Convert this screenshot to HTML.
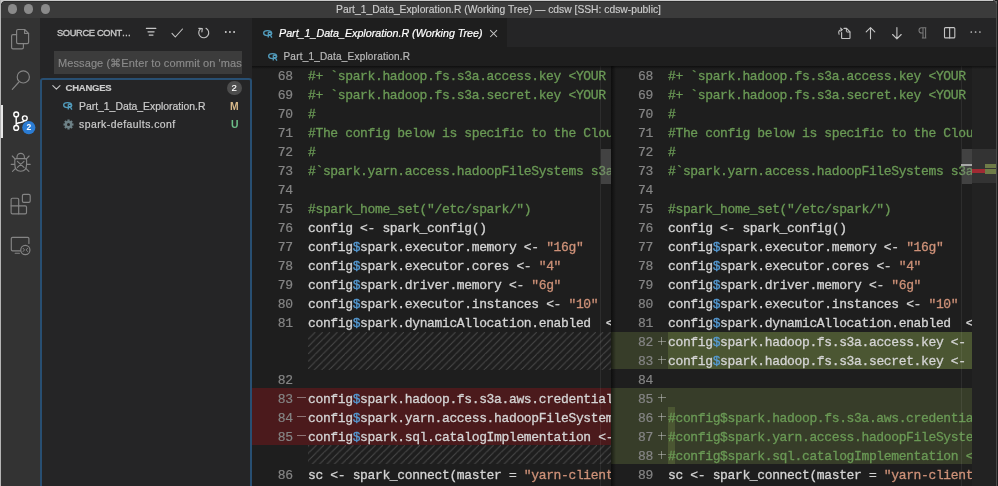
<!DOCTYPE html>
<html><head><meta charset="utf-8"><style>
*{margin:0;padding:0;box-sizing:border-box}
html,body{width:998px;height:486px;overflow:hidden;background:#c8c8c8}
body{position:relative;font-family:"Liberation Sans",sans-serif;-webkit-font-smoothing:antialiased}
.win{will-change:transform;position:absolute;left:0;top:0;width:998px;height:486px;overflow:hidden;background:#222222}
.edge{position:absolute;background:#c9c9c9}
.rb{position:absolute;left:996px;top:0;width:1px;height:486px;background:#3a3a3a}
.title{position:absolute;left:0;top:0;width:997px;height:18px;background:#3b3b3b}
.title .t{position:absolute;left:0;right:0;top:3.8px;-webkit-text-stroke:0.15px currentColor;text-align:center;color:#cccccc;font-size:10.3px;line-height:12px;white-space:pre}
.tl{position:absolute;top:4.4px;width:9.4px;height:9.4px;border-radius:50%;background:#8a8a8a}
.act{position:absolute;left:1px;top:18px;width:39px;height:468px;background:#333333}
.side{position:absolute;left:40px;top:18px;width:212px;height:468px;background:#252526}
.tabs{position:absolute;left:252px;top:18px;width:745px;height:29px;background:#252526}
.tab{position:absolute;left:0;top:0;width:254.5px;height:29px;background:#1e1e1e}
.crumb{position:absolute;left:252px;top:47px;width:745px;height:19px;background:#1e1e1e}
.ed{position:absolute;top:0;height:486px;overflow:hidden;background:linear-gradient(180deg,transparent 66px,#1e1e1e 66px)}
.ln{position:absolute;left:0;padding-top:2.15px;letter-spacing:-0.36px;-webkit-text-stroke:0.2px currentColor;width:42px;text-align:right;color:#858585;font-family:"Liberation Mono",monospace;font-size:13px;line-height:18.975px;height:18.975px}
.code{position:absolute;padding-top:2.15px;white-space:pre;letter-spacing:-0.36px;-webkit-text-stroke:0.3px currentColor;color:#d4d4d4;font-family:"Liberation Mono",monospace;font-size:13px;line-height:18.975px;height:18.975px}
.c{color:#6a9955} .d{color:#569cd6} .s{color:#ce9178}
.hatch{position:absolute;height:18.975px;background-image:repeating-linear-gradient(-45deg,rgba(200,200,200,.17) 0px,rgba(200,200,200,.17) 1.1px,transparent 1.1px,transparent 5.27px)}
.delbg{position:absolute;left:0;right:0;height:18.975px;background:#4b1a1c}
.insbg{position:absolute;left:0;right:0;height:18.975px;background:#373d29}
.instx{position:absolute;height:18.975px;background:#4b5632}
.sign{position:absolute;left:47px;padding-top:1.6px;width:8px;color:#8a8a8a;font-family:"Liberation Mono",monospace;font-size:13px;line-height:18.975px;height:18.975px;text-align:center}
.sg{position:absolute;background:rgba(205,205,205,.5)}
.svgabs{position:absolute;overflow:visible}
.actbar{position:absolute;left:0;top:87px;width:2px;height:33px;background:#e8e8e8}
.sidetitle{position:absolute;left:17px;top:9px;font-size:9.3px;font-weight:normal;-webkit-text-stroke:0.35px #c8c8c8;line-height:12px;color:#c8c8c8;white-space:pre;letter-spacing:-0.35px}
.inp{position:absolute;left:14px;top:33px;width:188px;height:23px;background:#3c3c3c;overflow:hidden}
.inp span{position:absolute;left:4px;top:6px;letter-spacing:0.1px;-webkit-text-stroke:0.15px currentColor;font-size:11px;line-height:13px;color:#8b8b8b;white-space:pre}
.focus{position:absolute;left:0;top:60px;width:212px;height:430px;border:2px solid #284f72;border-bottom:none;border-radius:3px 3px 0 0}
.changes{position:absolute;left:25.6px;top:63.5px;font-size:9.5px;letter-spacing:-0.25px;-webkit-text-stroke:0.15px #cccccc;font-weight:bold;line-height:12px;color:#cccccc;white-space:pre}
.badge{position:absolute;left:186.7px;top:62.9px;width:15px;height:14.2px;border-radius:7.1px;background:#4d4d4d;color:#fff;font-size:9.5px;line-height:14px;text-align:center;-webkit-text-stroke:0.15px #fff}
.f1{position:absolute;left:39px;top:82.5px;-webkit-text-stroke:0.2px currentColor;font-size:10.4px;line-height:12px;color:#cccccc;white-space:pre}
.f2{position:absolute;left:39px;top:100.5px;-webkit-text-stroke:0.2px currentColor;letter-spacing:0.47px;font-size:10.4px;line-height:12px;color:#cccccc;white-space:pre}
.m{position:absolute;left:190px;top:82.7px;font-size:10.4px;font-weight:bold;line-height:12px;color:#d8b98a;white-space:pre}
.u{position:absolute;left:191px;top:100.8px;font-size:10.4px;font-weight:bold;line-height:12px;color:#6dbf88;white-space:pre}
.tabt{position:absolute;left:27px;top:9px;-webkit-text-stroke:0.2px currentColor;font-size:10.7px;font-style:italic;line-height:12px;color:#ffffff;white-space:pre}
.crt{position:absolute;left:31.5px;top:4.3px;-webkit-text-stroke:0.2px currentColor;letter-spacing:0.2px;font-size:10px;line-height:12px;color:#bababa;white-space:pre}
.sbline{position:absolute;top:66px;width:1px;height:420px;background:rgba(255,255,255,.07)}
.slider{position:absolute;top:148.5px;width:11px;height:35.3px;background:rgba(121,121,121,.4)}
.rshadow{position:absolute;left:611px;top:66px;width:5px;height:420px;background:linear-gradient(90deg,rgba(0,0,0,.55),rgba(0,0,0,0))}
.ruler{position:absolute;left:972px;top:66px;width:25px;height:420px;background:#222222}
.rslider{position:absolute;left:0;top:82.5px;width:26px;height:34.5px;background:rgba(121,121,121,.2)}
.topshadow{position:absolute;left:252px;top:66px;width:746px;height:3px;background:linear-gradient(180deg,rgba(0,0,0,.5),rgba(0,0,0,0))}

.minus::after{content:"";position:absolute;left:0;right:0;top:9px;height:1px;background:#8a6a6a}
</style></head>
<body><div class="win">
<div class="title">
 <div class="tl" style="left:7.6px"></div><div class="tl" style="left:24.1px"></div><div class="tl" style="left:40.6px"></div>
 <div class="t">Part_1_Data_Exploration.R (Working Tree) — cdsw [SSH: cdsw-public]</div>
</div>
<div class="act"><div class="actbar"></div></div>
<svg class="svgabs" width="40" height="270" viewBox="0 0 40 270" style="left:0;top:0">
<g fill="none" stroke="#858585" stroke-width="1.15" stroke-linejoin="round" stroke-linecap="round">
 <!-- explorer -->
 <path d="M16.6 34.6 H13 Q11.6 34.6 11.6 36 V47.4 Q11.6 48.8 13 48.8 H22 Q23.4 48.8 23.4 47.4 V43.6"/>
 <path d="M18 29.5 H24.6 L28.6 33.5 V42.2 Q28.6 43.6 27.2 43.6 H18 Q16.6 43.6 16.6 42.2 V30.9 Q16.6 29.5 18 29.5 Z"/>
 <path d="M24.6 29.5 V33.5 H28.6"/>
 <!-- search -->
 <circle cx="23.3" cy="76.9" r="6.1"/>
 <path d="M18.9 82 L12.3 89.4"/>
 <!-- debug -->
 <path d="M17 158.6 V157.2 A3.7 3.9 0 0 1 24.4 157.2 V158.6"/>
 <path d="M14.8 160 Q14.8 158.6 16.2 158.6 H25.2 Q26.6 158.6 26.6 160 V164.2 Q26.6 171.2 20.7 171.2 Q14.8 171.2 14.8 164.2 Z"/>
 <path d="M17.4 161.4 L24 167.4 M24 161.4 L17.4 167.4"/>
 <path d="M12.3 156 L15 158.8 M29.1 156 L26.4 158.8 M11.2 164.3 H14.6 M30.2 164.3 H26.8 M12.5 171.3 L15.6 168.4 M28.9 171.3 L25.8 168.4"/>
 <!-- extensions -->
 <rect x="22.4" y="194.4" width="7.8" height="8" rx="1.4"/>
 <path d="M12.4 198.2 H17.4 Q18.7 198.2 18.7 199.5 V205.8 H25.2 Q26.5 205.8 26.5 207.1 V212.5 Q26.5 213.8 25.2 213.8 H12.4 Q11.1 213.8 11.1 212.5 V199.5 Q11.1 198.2 12.4 198.2 Z"/>
 <path d="M11.1 205.8 H18.7 V213.8"/>
 <!-- remote -->
 <path d="M20.3 250.9 H12.6 Q11.3 250.9 11.3 249.6 V238.6 Q11.3 237.3 12.6 237.3 H27.6 Q28.9 237.3 28.9 238.6 V243.5"/>
 <path d="M15.2 253.2 H19.4"/>
 <circle cx="25.35" cy="250" r="4.6"/>
 <path d="M23.1 248.3 L24.5 249.9 L23.1 251.5 M27.6 248.3 L26.2 249.9 L27.6 251.5" stroke-width="0.95"/>
</g>
<!-- source control (active) -->
<g fill="none" stroke="#ffffff" stroke-width="1.4">
 <circle cx="16.2" cy="114.4" r="2.4"/>
 <circle cx="16.2" cy="127.9" r="2.4"/>
 <circle cx="24.8" cy="118.3" r="2.4"/>
 <path d="M16.2 116.8 V125.5"/>
 <path d="M16.5 124.2 Q17.5 122.6 20.5 122.5 Q23.4 122.3 24.3 120.6"/>
</g>
<circle cx="28.8" cy="127.6" r="6.6" fill="#2b7cd3"/>
<text x="28.8" y="130.4" text-anchor="middle" font-family="Liberation Sans" font-weight="bold" font-size="8.5" fill="#fff">2</text>
</svg>
<div class="side">
 <div class="sidetitle">SOURCE CONT…</div>
 <div class="inp"><span>Message (⌘Enter to commit on 'master')</span></div>
 <div class="focus"></div>
 <div class="changes">CHANGES</div>
 <div class="badge">2</div>
 <div class="f1">Part_1_Data_Exploration.R</div>
 <div class="m">M</div>
 <div class="f2">spark-defaults.conf</div>
 <div class="u">U</div>
</div>
<svg class="svgabs" width="211" height="130" viewBox="40 18 211 130" style="left:40px;top:18px">
<g fill="none" stroke="#c5c5c5" stroke-width="1.1" stroke-linecap="round" stroke-linejoin="round">
 <path d="M146.4 28.4 H155.8 M148 31.8 H154.1 M149.2 35.1 H153" stroke-width="1.2"/>
 <path d="M172 33.3 L175.3 37 L182.5 29"/>
 <path d="M200.2 29.2 A5 5 0 1 0 206 28.3"/>
 <path d="M198.8 28.4 L202.3 28.6 L201.9 31.9"/>
 <path d="M52.8 85.6 L56.4 89.2 L60 85.6" stroke="#c5c5c5"/>
</g>
<g fill="#d0d0d0"><circle cx="225.8" cy="32" r="0.95"/><circle cx="229.9" cy="32" r="0.95"/><circle cx="234.1" cy="32" r="0.95"/></g>
</svg>
<svg class="svgabs" width="11" height="9" viewBox="0 0 11 9" style="left:63.4px;top:102px">
<ellipse cx="4.6" cy="3.1" rx="3.9" ry="2.5" fill="none" stroke="#519aba" stroke-width="1.45"/>
<path d="M5.3 2.2 H7.2 Q8.7 2.2 8.7 3.4 Q8.7 4.7 7.2 4.7 H5.3 M5.3 2.2 V7.6 M7.1 4.7 L8.9 7.6" fill="none" stroke="#519aba" stroke-width="1.35"/>
</svg>
<svg class="svgabs" width="11" height="11" viewBox="-5.5 -5.5 11 11" style="left:62.7px;top:118.8px">
<g fill="#6d8086">
<circle r="3.7"/>
<rect x="-1.1" y="-5" width="2.2" height="2.4" transform="rotate(0)"/><rect x="-1.1" y="-5" width="2.2" height="2.4" transform="rotate(45)"/><rect x="-1.1" y="-5" width="2.2" height="2.4" transform="rotate(90)"/><rect x="-1.1" y="-5" width="2.2" height="2.4" transform="rotate(135)"/><rect x="-1.1" y="-5" width="2.2" height="2.4" transform="rotate(180)"/><rect x="-1.1" y="-5" width="2.2" height="2.4" transform="rotate(225)"/><rect x="-1.1" y="-5" width="2.2" height="2.4" transform="rotate(270)"/><rect x="-1.1" y="-5" width="2.2" height="2.4" transform="rotate(315)"/>
</g><circle r="1.5" fill="#252526"/></svg>
<div class="tabs"><div class="tab"><div class="tabt">Part_1_Data_Exploration.R (Working Tree)</div></div></div>
<svg class="svgabs" width="160" height="28" viewBox="830 18 160 28" style="left:830px;top:18px">
<g fill="none" stroke="#c5c5c5" stroke-width="1.1" stroke-linecap="round" stroke-linejoin="round">
 <path d="M844 28.4 H846.6 L850 31.8 V37.9 Q850 38.5 849.4 38.5 H842.2 Q841.6 38.5 841.6 37.9 V32.6"/>
 <path d="M846.4 28.6 V31.4 Q846.4 32 847 32 H849.8" stroke-width="1"/>
 <path d="M839.1 34.3 Q837.5 30.3 842 29.6" stroke-width="1.05"/>
 <path d="M840.6 28.1 L842.2 29.6 L840.8 31.1" stroke-width="1.05"/>
 <path d="M870.5 27.6 V38.8 M866.2 31.9 L870.5 27.6 L874.8 31.9"/>
 <path d="M896.9 27.6 V38.8 M892.6 34.5 L896.9 38.8 L901.2 34.5"/>
 <rect x="944.5" y="27.6" width="10.3" height="10.3" rx="1"/>
 <path d="M949.65 27.6 V37.9"/>
</g>
<g fill="none" stroke="#7a7a7a" stroke-width="1.05">
 <path d="M923 27.8 V38 M925.6 27.8 V38 M921.9 38 H926.3 M926.3 27.8 H921.6 A2.6 2.6 0 0 0 921.6 33 H923"/>
</g>
<g fill="#c5c5c5"><circle cx="971.3" cy="32" r="0.85"/><circle cx="975.6" cy="32" r="0.85"/><circle cx="979.9" cy="32" r="0.85"/></g>
</svg>
<svg class="svgabs" width="10" height="10" viewBox="0 0 10 10" style="left:488.8px;top:28.5px">
<path d="M1.2 1.2 L8 8 M8 1.2 L1.2 8" stroke="#c5c5c5" stroke-width="1.05" fill="none"/></svg>
<div class="crumb"><div class="crt">Part_1_Data_Exploration.R</div></div>
<svg class="svgabs" width="11" height="9" viewBox="0 0 11 9" style="left:263.3px;top:29.8px">
<ellipse cx="4.6" cy="3.1" rx="3.9" ry="2.5" fill="none" stroke="#519aba" stroke-width="1.45"/>
<path d="M5.3 2.2 H7.2 Q8.7 2.2 8.7 3.4 Q8.7 4.7 7.2 4.7 H5.3 M5.3 2.2 V7.6 M7.1 4.7 L8.9 7.6" fill="none" stroke="#519aba" stroke-width="1.35"/>
</svg>
<svg class="svgabs" width="11" height="9" viewBox="0 0 11 9" style="left:268.2px;top:52.8px">
<ellipse cx="4.6" cy="3.1" rx="3.9" ry="2.5" fill="none" stroke="#519aba" stroke-width="1.45"/>
<path d="M5.3 2.2 H7.2 Q8.7 2.2 8.7 3.4 Q8.7 4.7 7.2 4.7 H5.3 M5.3 2.2 V7.6 M7.1 4.7 L8.9 7.6" fill="none" stroke="#519aba" stroke-width="1.35"/>
</svg>
<div class="ed" style="left:252px;width:360px">
<div class="ln" style="top:65.9px;width:40.7px">68</div>
<div class="code" style="top:65.9px;left:56px"><span class="c">#+ `spark.hadoop.fs.s3a.access.key &lt;YOUR ACCESS KEY&gt;`</span></div>
<div class="ln" style="top:84.875px;width:40.7px">69</div>
<div class="code" style="top:84.875px;left:56px"><span class="c">#+ `spark.hadoop.fs.s3a.secret.key &lt;YOUR SECRET KEY&gt;`</span></div>
<div class="ln" style="top:103.85000000000001px;width:40.7px">70</div>
<div class="code" style="top:103.85000000000001px;left:56px"><span class="c">#</span></div>
<div class="ln" style="top:122.82500000000002px;width:40.7px">71</div>
<div class="code" style="top:122.82500000000002px;left:56px"><span class="c">#The config below is specific to the Cloudera</span></div>
<div class="ln" style="top:141.8px;width:40.7px">72</div>
<div class="code" style="top:141.8px;left:56px"><span class="c">#</span></div>
<div class="ln" style="top:160.775px;width:40.7px">73</div>
<div class="code" style="top:160.775px;left:56px"><span class="c">#`spark.yarn.access.hadoopFileSystems s3a://</span></div>
<div class="ln" style="top:179.75px;width:40.7px">74</div>
<div class="ln" style="top:198.72500000000002px;width:40.7px">75</div>
<div class="code" style="top:198.72500000000002px;left:56px"><span class="c">#spark_home_set("/etc/spark/")</span></div>
<div class="ln" style="top:217.70000000000002px;width:40.7px">76</div>
<div class="code" style="top:217.70000000000002px;left:56px">config &lt;- spark_config()</div>
<div class="ln" style="top:236.675px;width:40.7px">77</div>
<div class="code" style="top:236.675px;left:56px">config<span class="d">$</span>spark.executor.memory &lt;- <span class="s">"16g"</span></div>
<div class="ln" style="top:255.65px;width:40.7px">78</div>
<div class="code" style="top:255.65px;left:56px">config<span class="d">$</span>spark.executor.cores &lt;- <span class="s">"4"</span></div>
<div class="ln" style="top:274.625px;width:40.7px">79</div>
<div class="code" style="top:274.625px;left:56px">config<span class="d">$</span>spark.driver.memory &lt;- <span class="s">"6g"</span></div>
<div class="ln" style="top:293.6px;width:40.7px">80</div>
<div class="code" style="top:293.6px;left:56px">config<span class="d">$</span>spark.executor.instances &lt;- <span class="s">"10"</span></div>
<div class="ln" style="top:312.57500000000005px;width:40.7px">81</div>
<div class="code" style="top:312.57500000000005px;left:56px">config<span class="d">$</span>spark.dynamicAllocation.enabled  &lt;- <span class="s">"false"</span></div>
<svg class="svgabs" style="top:331.55000000000007px;left:56px" width="304" height="37.95"><defs><pattern id="hpL14" patternUnits="userSpaceOnUse" width="7.38" height="7.38" patternTransform="translate(0,0)"><path d="M-1 8.379999999999999 L8.379999999999999 -1 M-8.379999999999999 1 L1 -1" stroke="rgba(200,200,200,.25)" stroke-width="1" fill="none"/><path d="M6.38 8.379999999999999 L8.379999999999999 6.38" stroke="rgba(200,200,200,.25)" stroke-width="1"/></pattern></defs><rect width="100%" height="100%" fill="url(#hpL14)"/></svg>
<div class="ln" style="top:369.5px;width:40.7px">82</div>
<div class="delbg" style="top:388.475px"></div>
<div class="ln" style="top:388.475px;width:40.7px">83</div>
<div class="sg" style="top:397.43px;left:45px;width:8.6px;height:1px"></div>
<div class="code" style="top:388.475px;left:56px">config<span class="d">$</span>spark.hadoop.fs.s3a.aws.credentials.provider</div>
<div class="delbg" style="top:407.45000000000005px"></div>
<div class="ln" style="top:407.45000000000005px;width:40.7px">84</div>
<div class="sg" style="top:416.40px;left:45px;width:8.6px;height:1px"></div>
<div class="code" style="top:407.45000000000005px;left:56px">config<span class="d">$</span>spark.yarn.access.hadoopFileSystems &lt;- <span class="s">"s3a"</span></div>
<div class="delbg" style="top:426.42500000000007px"></div>
<div class="ln" style="top:426.42500000000007px;width:40.7px">85</div>
<div class="sg" style="top:435.38px;left:45px;width:8.6px;height:1px"></div>
<div class="code" style="top:426.42500000000007px;left:56px">config<span class="d">$</span>spark.sql.catalogImplementation &lt;- <span class="s">"hive"</span></div>
<svg class="svgabs" style="top:445.4px;left:56px" width="304" height="18.975"><defs><pattern id="hpL20" patternUnits="userSpaceOnUse" width="7.38" height="7.38" patternTransform="translate(1.2,0)"><path d="M-1 8.379999999999999 L8.379999999999999 -1 M-8.379999999999999 1 L1 -1" stroke="rgba(200,200,200,.25)" stroke-width="1" fill="none"/><path d="M6.38 8.379999999999999 L8.379999999999999 6.38" stroke="rgba(200,200,200,.25)" stroke-width="1"/></pattern></defs><rect width="100%" height="100%" fill="url(#hpL20)"/></svg>
<div class="ln" style="top:464.375px;width:40.7px">86</div>
<div class="code" style="top:464.375px;left:56px">sc &lt;- spark_connect(master = <span class="s">"yarn-client"</span>, config</div>
</div>
<div class="sbline" style="left:600px"></div>
<div class="slider" style="left:600.5px"></div>
<div class="ed" style="left:611px;width:362px">
<div class="ln" style="top:65.9px;width:42px">68</div>
<div class="code" style="top:65.9px;left:57px"><span class="c">#+ `spark.hadoop.fs.s3a.access.key &lt;YOUR ACCESS KEY&gt;`</span></div>
<div class="ln" style="top:84.875px;width:42px">69</div>
<div class="code" style="top:84.875px;left:57px"><span class="c">#+ `spark.hadoop.fs.s3a.secret.key &lt;YOUR SECRET KEY&gt;`</span></div>
<div class="ln" style="top:103.85000000000001px;width:42px">70</div>
<div class="code" style="top:103.85000000000001px;left:57px"><span class="c">#</span></div>
<div class="ln" style="top:122.82500000000002px;width:42px">71</div>
<div class="code" style="top:122.82500000000002px;left:57px"><span class="c">#The config below is specific to the Cloudera</span></div>
<div class="ln" style="top:141.8px;width:42px">72</div>
<div class="code" style="top:141.8px;left:57px"><span class="c">#</span></div>
<div class="ln" style="top:160.775px;width:42px">73</div>
<div class="code" style="top:160.775px;left:57px"><span class="c">#`spark.yarn.access.hadoopFileSystems s3a://</span></div>
<div class="ln" style="top:179.75px;width:42px">74</div>
<div class="ln" style="top:198.72500000000002px;width:42px">75</div>
<div class="code" style="top:198.72500000000002px;left:57px"><span class="c">#spark_home_set("/etc/spark/")</span></div>
<div class="ln" style="top:217.70000000000002px;width:42px">76</div>
<div class="code" style="top:217.70000000000002px;left:57px">config &lt;- spark_config()</div>
<div class="ln" style="top:236.675px;width:42px">77</div>
<div class="code" style="top:236.675px;left:57px">config<span class="d">$</span>spark.executor.memory &lt;- <span class="s">"16g"</span></div>
<div class="ln" style="top:255.65px;width:42px">78</div>
<div class="code" style="top:255.65px;left:57px">config<span class="d">$</span>spark.executor.cores &lt;- <span class="s">"4"</span></div>
<div class="ln" style="top:274.625px;width:42px">79</div>
<div class="code" style="top:274.625px;left:57px">config<span class="d">$</span>spark.driver.memory &lt;- <span class="s">"6g"</span></div>
<div class="ln" style="top:293.6px;width:42px">80</div>
<div class="code" style="top:293.6px;left:57px">config<span class="d">$</span>spark.executor.instances &lt;- <span class="s">"10"</span></div>
<div class="ln" style="top:312.57500000000005px;width:42px">81</div>
<div class="code" style="top:312.57500000000005px;left:57px">config<span class="d">$</span>spark.dynamicAllocation.enabled  &lt;- <span class="s">"false"</span></div>
<div class="insbg" style="top:331.55000000000007px"></div>
<div class="instx" style="top:331.55000000000007px;left:57px;right:0"></div>
<div class="ln" style="top:331.55000000000007px;width:42px">82</div>
<div class="sg" style="top:340.50px;left:47px;width:7.6px;height:1px"></div>
<div class="sg" style="top:337.15px;left:50.3px;width:1px;height:7.8px"></div>
<div class="code" style="top:331.55000000000007px;left:57px">config<span class="d">$</span>spark.hadoop.fs.s3a.access.key &lt;- <span class="s">"KEY"</span></div>
<div class="insbg" style="top:350.525px"></div>
<div class="instx" style="top:350.525px;left:57px;right:0"></div>
<div class="ln" style="top:350.525px;width:42px">83</div>
<div class="sg" style="top:359.47px;left:47px;width:7.6px;height:1px"></div>
<div class="sg" style="top:356.12px;left:50.3px;width:1px;height:7.8px"></div>
<div class="code" style="top:350.525px;left:57px">config<span class="d">$</span>spark.hadoop.fs.s3a.secret.key &lt;- <span class="s">"KEY"</span></div>
<div class="ln" style="top:369.5px;width:42px">84</div>
<div class="insbg" style="top:388.475px"></div>
<div class="ln" style="top:388.475px;width:42px">85</div>
<div class="sg" style="top:397.43px;left:47px;width:7.6px;height:1px"></div>
<div class="sg" style="top:394.08px;left:50.3px;width:1px;height:7.8px"></div>
<div class="insbg" style="top:407.45000000000005px"></div>
<div class="instx" style="top:407.45000000000005px;left:57px;width:7.44px"></div>
<div class="ln" style="top:407.45000000000005px;width:42px">86</div>
<div class="sg" style="top:416.40px;left:47px;width:7.6px;height:1px"></div>
<div class="sg" style="top:413.05px;left:50.3px;width:1px;height:7.8px"></div>
<div class="code" style="top:407.45000000000005px;left:57px"><span class="c">#config$spark.hadoop.fs.s3a.aws.credentials.provider</span></div>
<div class="insbg" style="top:426.42500000000007px"></div>
<div class="instx" style="top:426.42500000000007px;left:57px;width:7.44px"></div>
<div class="ln" style="top:426.42500000000007px;width:42px">87</div>
<div class="sg" style="top:435.38px;left:47px;width:7.6px;height:1px"></div>
<div class="sg" style="top:432.03px;left:50.3px;width:1px;height:7.8px"></div>
<div class="code" style="top:426.42500000000007px;left:57px"><span class="c">#config$spark.yarn.access.hadoopFileSystems &lt;- "s3a"</span></div>
<div class="insbg" style="top:445.4px"></div>
<div class="instx" style="top:445.4px;left:57px;width:7.44px"></div>
<div class="ln" style="top:445.4px;width:42px">88</div>
<div class="sg" style="top:454.35px;left:47px;width:7.6px;height:1px"></div>
<div class="sg" style="top:451.00px;left:50.3px;width:1px;height:7.8px"></div>
<div class="code" style="top:445.4px;left:57px"><span class="c">#config$spark.sql.catalogImplementation &lt;- "hive"</span></div>
<div class="ln" style="top:464.375px;width:42px">89</div>
<div class="code" style="top:464.375px;left:57px">sc &lt;- spark_connect(master = <span class="s">"yarn-client"</span>, config</div>
</div>
<div class="rshadow"></div>
<div class="sbline" style="left:961px"></div>
<div class="slider" style="left:961.5px"></div>
<div class="ruler">
 <div class="rslider"></div>
 <div style="position:absolute;left:-11px;top:98.4px;width:11px;height:2px;background:#a8a8a8"></div>
 <div style="position:absolute;left:0;top:103.3px;width:13px;height:3.4px;background:#a02a33"></div>
 <div style="position:absolute;left:13px;top:98.3px;width:13px;height:3.3px;background:#6f7c48"></div>
 <div style="position:absolute;left:13px;top:103.3px;width:13px;height:4.4px;background:#6f7c48"></div>
</div>
<div class="topshadow"></div>
<div class="rb"></div>
<div class="edge" style="left:0;top:0;width:995px;height:1px"></div>
<div class="edge" style="left:0;top:1px;width:995px;height:1px;background:#2c2c2c"></div>
<div class="edge" style="left:0;top:0;width:1px;height:486px;background:#b5b5b5"></div>
<div class="edge" style="left:996px;top:2px;width:1px;height:484px;background:#4a4a4a"></div>
<div class="edge" style="left:997px;top:0;width:1px;height:486px;background:#1e1e1e"></div>
<div class="edge" style="left:1px;top:1px;width:4px;height:4px;background:radial-gradient(circle at 4px 4px,transparent 3px,#2c2c2c 3.6px,#c9c9c9 4.4px)"></div>
<div class="edge" style="left:993px;top:0px;width:4px;height:4px;background:radial-gradient(circle at 0px 4px,transparent 2.6px,#5a5a5a 3.3px,#6a6a6a 4.2px)"></div>
<div class="edge" style="left:995px;top:0px;width:3px;height:1px;background:#1e1e1e"></div>
</div></body></html>
